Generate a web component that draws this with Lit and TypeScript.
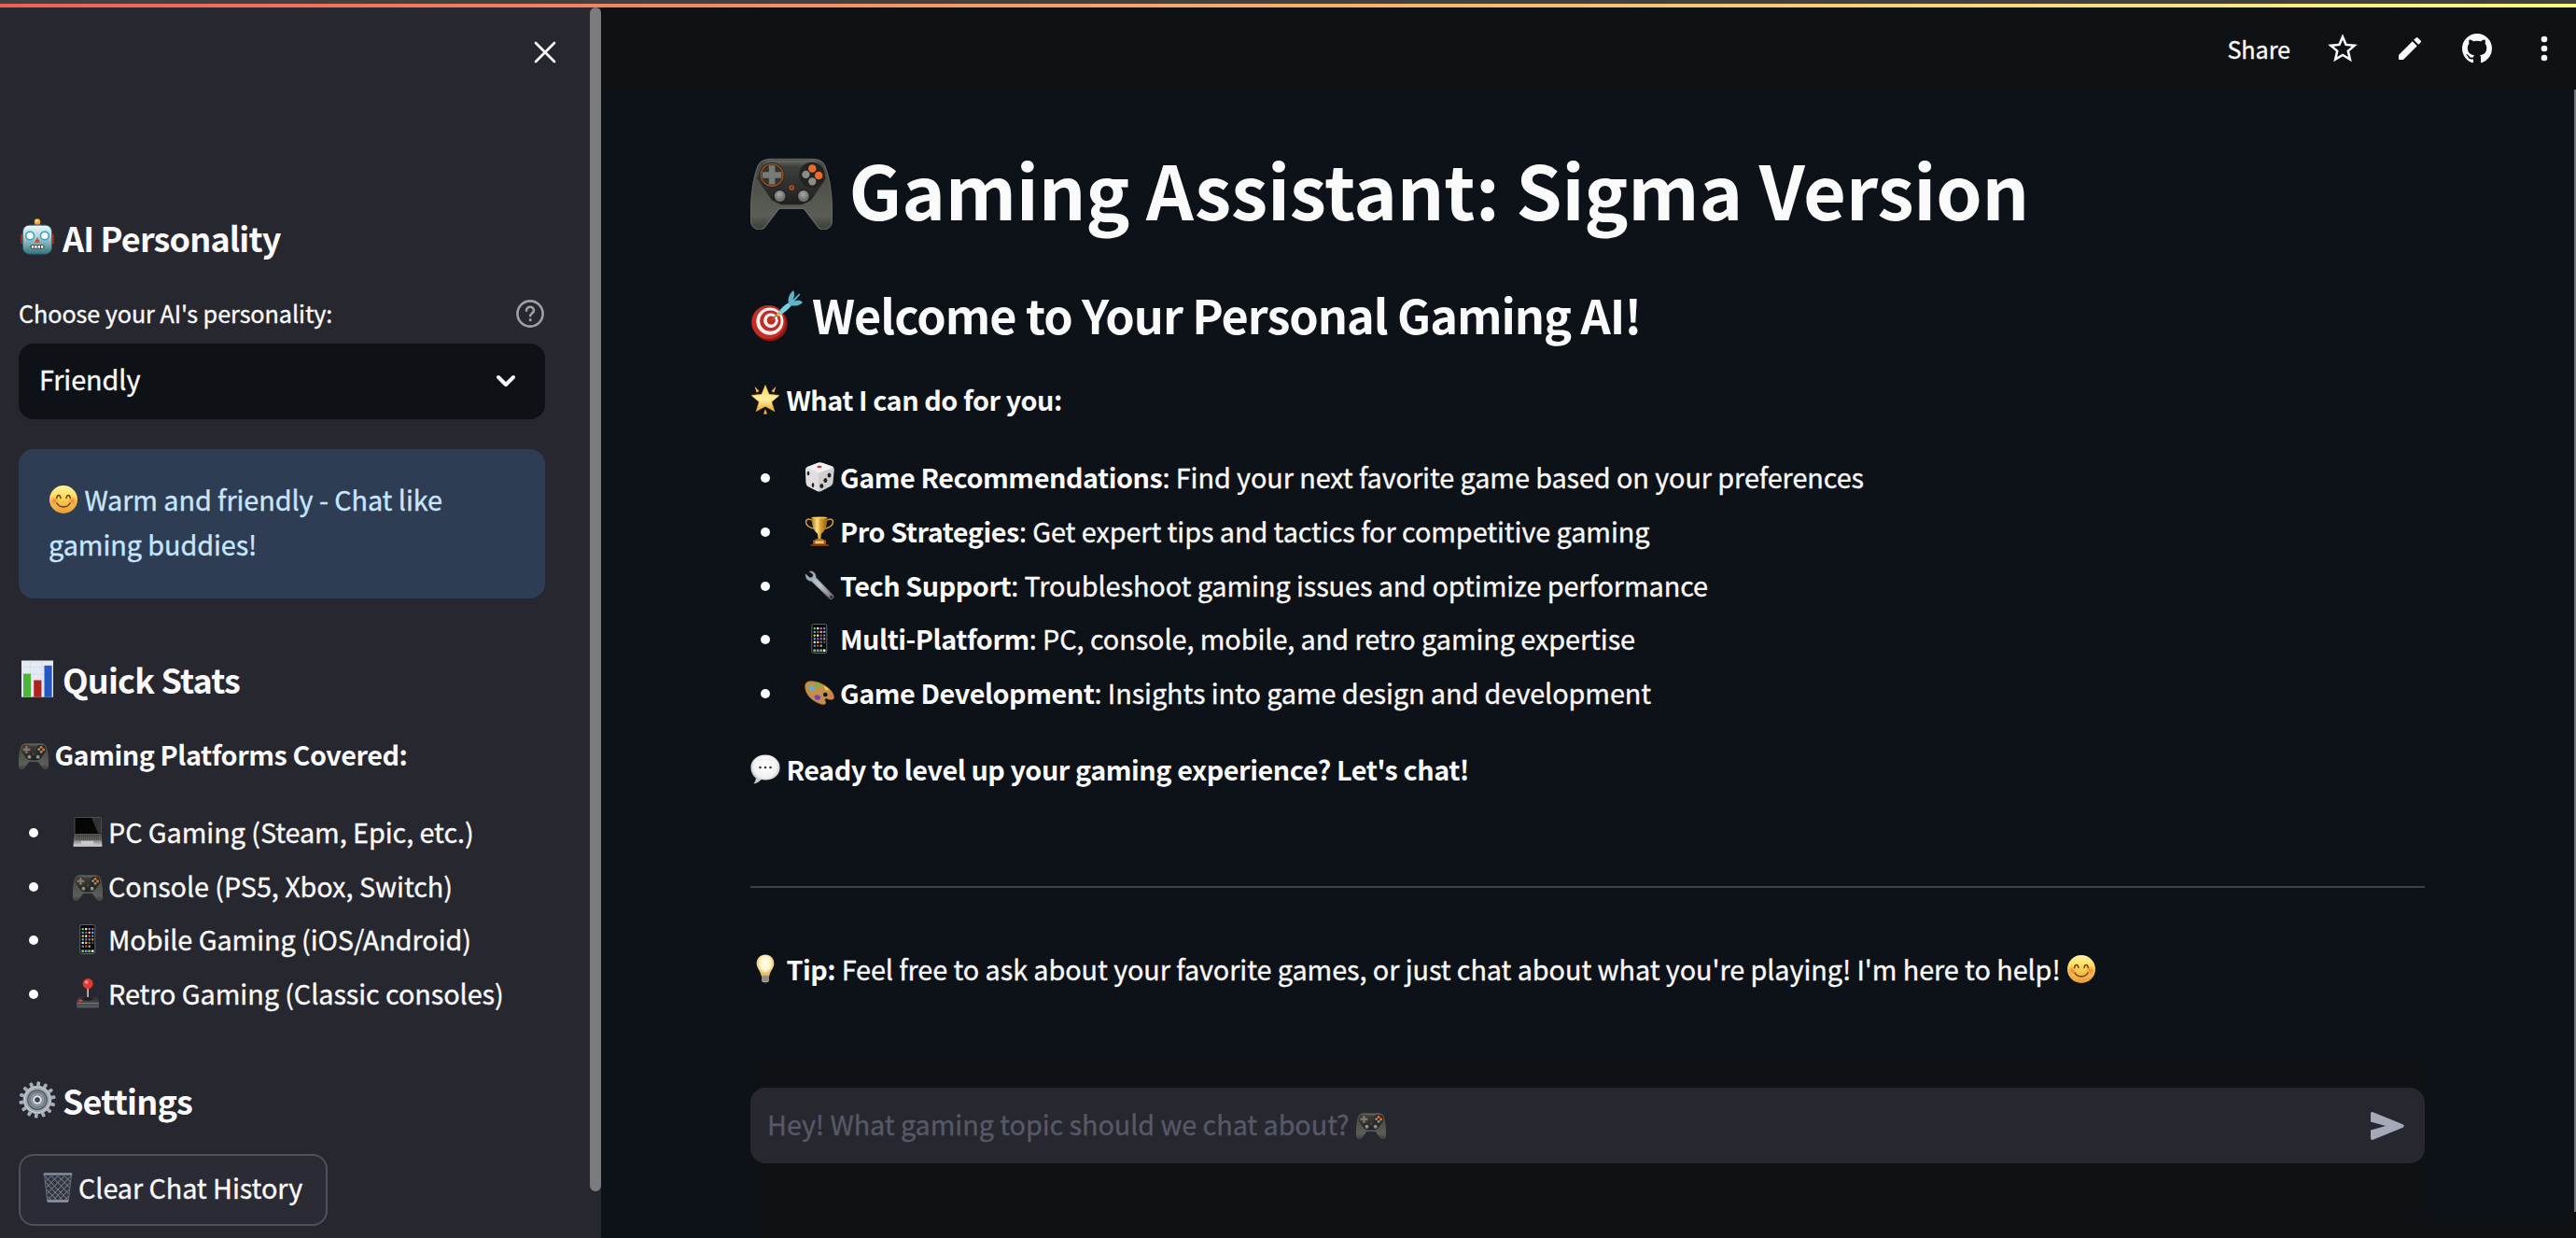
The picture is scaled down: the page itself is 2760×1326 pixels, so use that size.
import { LitElement, html, svg, css, TemplateResult } from "lit";
import { customElement } from "lit/decorators.js";

const dots = (pts: number[][], color: string, r = 1) =>
  pts.map(([x, y]) => svg`<circle cx=${x} cy=${y} r=${r} fill=${color} />`);

const appColors = ["#5fd35f", "#fff", "#c86adf", "#8a8a8a", "#4aa8e8", "#777", "#ffb98a", "#6ab8f0", "#f4d84a", "#fff", "#e05050", "#4aa8e8",
  "#38b0e8", "#d048c0", "#3f8ff0", "#f08a2a", "#eee", "#f4d84a", "#777", "#555", "#4aa8e8", "#e04848", "#bbb", "#111"];

const art: Record<string, () => unknown> = {
  gamepad: () => svg`
    <defs>
      <linearGradient id="gpBody" x1="0" y1="0" x2="0" y2="1"><stop offset="0" stop-color="#474845"/><stop offset=".45" stop-color="#51534d"/><stop offset=".8" stop-color="#5b5d57"/><stop offset="1" stop-color="#3b3c39"/></linearGradient>
      <linearGradient id="gpTop" x1="0" y1="0" x2="0" y2="1"><stop offset="0" stop-color="#6a6c68"/><stop offset=".15" stop-color="#3d3f3c"/><stop offset="1" stop-color="#1f201f"/></linearGradient>
      <radialGradient id="gpStick" cx=".45" cy=".35"><stop offset="0" stop-color="#a8aaa8"/><stop offset="1" stop-color="#6f7170"/></radialGradient>
    </defs>
    <path d="M3 7C4 5 6 4.400 8.500 4.500H23.500C26 4.400 28 5 29 7C31 12 32 20 31.900 28C31.800 32.500 27.500 32.800 26 30.500L20.800 23.800H11.200L6 30.500C4.500 32.800.200 32.500.100 28C0 20 1 12 3 7Z" fill="url(#gpBody)" stroke="#7c7e78" stroke-opacity=".65" stroke-width=".45"/>
    <path d="M5 6.200C7 4.300 9 5 11 5H21C23 5 25 4.300 27 6.200L29.500 12L27.500 15L23.600 20.500L20 22.300H12L8.400 20.500L4.500 15L2.500 12Z" fill="url(#gpTop)"/>
    <circle cx="8.400" cy="10.700" r="4.900" fill="#262726"/><circle cx="8.400" cy="10.700" r="4.300" fill="#333432" stroke="#a3501f" stroke-width=".5"/>
    <path d="M7.200 7H9.600V9.500H12.100V11.900H9.600V14.400H7.200V11.900H4.700V9.500H7.200Z" fill="#777a77"/>
    <circle cx="24" cy="10.700" r="5" fill="#222322"/>
    <circle cx="24.100" cy="8.200" r="1.550" fill="#ee6a26"/><circle cx="26.600" cy="10.900" r="1.550" fill="#ee6a26"/><circle cx="21.600" cy="10.500" r="1.500" fill="#8c8e8c"/><circle cx="24.100" cy="13.200" r="1.500" fill="#8c8e8c"/>
    <circle cx="16.100" cy="15.600" r=".75" fill="#333" stroke="#c25a20" stroke-width=".5"/>
    <circle cx="11.500" cy="19" r="2.700" fill="#222"/><circle cx="20.700" cy="19" r="2.700" fill="#222"/>
    <circle cx="11.500" cy="18.900" r="2.150" fill="url(#gpStick)"/><circle cx="20.700" cy="18.900" r="2.150" fill="url(#gpStick)"/>`,
  target: () => svg`
    <ellipse cx="12" cy="21" rx="10.700" ry="10.600" fill="#8e1815"/><circle cx="11" cy="20" r="10.300" fill="#c72b25"/>
    <circle cx="11.900" cy="19.500" r="8.300" fill="#f4f0ee"/><circle cx="12.200" cy="19.200" r="6.400" fill="#c02b28"/><circle cx="12.500" cy="19" r="4.500" fill="#f4f0ee"/><circle cx="12.700" cy="18.900" r="2.600" fill="#c02b28"/>
    <path d="M12.700 19L19 12.800" stroke="#9a6a35" stroke-width=".8"/><path d="M15.800 15.500L17.300 13.600L19 15.300L17 16.600Z" fill="#e3b93c"/>
    <path d="M17.300 14C19 11 21 9.500 23.500 8.200L25 10C23 12.500 20.500 14.500 17.800 15.800Z" fill="#79cfe0"/>
    <path d="M23.300 8.500C22.800 5 24 2.500 26.300.600C27.300 2.500 27 4.500 26 6.400L29.800 2.600L30.500 3.200L27 7.200C29 6.500 31 6.600 32 8C30.500 9.800 27 10.500 24.600 9.800Z" fill="#5eb3c7"/>`,
  star: () => svg`
    <defs><linearGradient id="stG" x1="0" y1="0" x2="0" y2="1"><stop offset="0" stop-color="#f8d568"/><stop offset=".55" stop-color="#fdf0a0"/><stop offset="1" stop-color="#eda62c"/></linearGradient></defs>
    <path d="M16 .500L20 10.300L31 11.400L22.800 18.500L25.800 28.600L16 23.300L6.200 28.600L9.200 18.500L1 11.400L12 10.300Z" fill="url(#stG)" stroke="#edaf3c" stroke-width=".6" stroke-linejoin="round"/>
    <path d="M16 26L18 31.500H14ZM4.500 2L9.500 6.800L6.800 8.700ZM27.500 2L22.500 6.800L25.200 8.700Z" fill="#f1b43c"/>`,
  die: () => svg`
    <path d="M1 8Q1 6 3 5L15 .600Q17 .200 19 .800L29.500 4.500Q32 5.600 31.800 8L30.500 22Q30 24.500 28 25.700L17.500 31.200Q15.500 32 13.500 31L3.800 26Q2 25 1.700 22.500Z" fill="#cfcfcf"/>
    <path d="M2 6Q2 5.400 4 4.700L15 .600Q17 .200 19 .800L29.500 4.500Q31 5.200 30.500 6L17 11Q15 11.600 13 11Z" fill="#f3f3f3"/>
    <path d="M1 8Q1.300 5.500 4 6.700L12.500 10Q15 11 15 13L15 31.500L3.800 26Q2 25 1.700 22.500Z" fill="#dedede"/>
    <ellipse cx="16" cy="5" rx="2.700" ry="1.200" fill="#d33b35"/>
    <ellipse cx="4" cy="12" rx="1.300" ry="2.300" fill="#222"/><ellipse cx="9" cy="24.500" rx="1.300" ry="2.500" fill="#222"/>
    <ellipse cx="26.500" cy="14" rx="2" ry="2.500" fill="#222"/><ellipse cx="22.400" cy="19.500" rx="2" ry="2.500" fill="#222"/><ellipse cx="18.300" cy="25.500" rx="2" ry="2.500" fill="#222"/>`,
  trophy: () => svg`
    <defs><linearGradient id="trG"><stop offset="0" stop-color="#a9741a"/><stop offset=".35" stop-color="#fbe28a"/><stop offset=".6" stop-color="#d99a27"/><stop offset="1" stop-color="#8f5e12"/></linearGradient></defs>
    <path d="M8 4.500C5 2 1.500 3 1.500 6C1.500 10 6 12.500 11.500 13.500M24 4.500C27 2 30.500 3 30.500 6C30.500 10 26 12.500 20.500 13.500" fill="none" stroke="#d49a35" stroke-width="1.500"/>
    <path d="M7.500 1H24.500C24.500 10 22 16 18 18.500L17.300 24.500H14.700L14 18.500C10 16 7.500 10 7.500 1Z" fill="url(#trG)"/><ellipse cx="16" cy="1.300" rx="8.500" ry=".9" fill="#f6cf67"/>
    <path d="M11.500 25Q16 22.500 20.500 25L21.500 26H10.500Z" fill="#b97f1c"/><rect x="9" y="25.500" width="14" height="4.800" fill="#a95418"/><rect x="11.500" y="26.400" width="9" height="2.800" fill="#f1cf6c"/><rect x="6.500" y="30" width="19.500" height="2" rx=".4" fill="#7c3512"/>`,
  wrench: () => svg`
    <defs><linearGradient id="wrG" x1="0" y1="0" x2="1" y2="1"><stop offset="0" stop-color="#8f9cad"/><stop offset=".5" stop-color="#b6bdc9"/><stop offset="1" stop-color="#6b5a60"/></linearGradient></defs>
    <path d="M1 3.500C.500 8 3 11.500 7.500 11.700L27 30.500C29 32 32.500 29.500 31 26.700L12.300 7.600C12.500 3 9.500.300 5.500.800L5 1.300L9 4.300C9.500 6.500 7.500 8 5.500 7.500Z" fill="url(#wrG)" stroke="#5d6675" stroke-width=".4"/>
    <circle cx="28.700" cy="28.500" r="1.300" fill="#15161c"/><path d="M10.500 10L26 26" stroke="#e3e6ec" stroke-width=".8" opacity=".6"/>`,
  phone: () => svg`
    <rect x="7.800" y=".500" width="16" height="31" rx="1.800" fill="#060606" stroke="#6c6c6c" stroke-width=".9"/>
    ${appColors.map((c, i) => svg`<rect x=${9.7 + (i % 4) * 3.5} y=${4 + Math.floor(i / 4) * 3.7} width="2.100" height="2.300" rx=".5" fill=${c} />`)}
    <rect x="8.700" y="27.200" width="14.200" height="3.200" fill="#333"/>
    ${["#5fd35f", "#4aa8e8", "#5fd35f", "#fff"].map((c, i) => svg`<rect x=${9.5 + i * 3.5} y="27.600" width="2.400" height="2.400" rx=".5" fill=${c} />`)}`,
  palette: () => svg`
    <path d="M.500 10C0 4 5 3 10 3.800C20 5 31 13 31.700 20.500C32 23.500 28 24.500 24.500 22.500C22 21.500 21 23 22.500 25C24 28.500 21 29.500 17 28C8 25 1 18 .500 10Z" fill="#c48f48" stroke="#8a5a24" stroke-width=".5"/>
    <circle cx="22.300" cy="18" r="2.300" fill="#0e1117"/>
    <path d="M4.500 9.500L7 8L9 9L11.500 12L9 14L6 13Z" fill="#54b4e0"/><path d="M11.500 5.500L14.500 5L17.500 8L14.500 9.500L12 8Z" fill="#5cc04a"/><path d="M20.500 9L24 10.500L26.500 13.500L22.500 13Z" fill="#f2d45a"/><path d="M10 20L13.500 18L17 20L16.500 23.500L12 23.500Z" fill="#7a3fc0"/><path d="M26 18.500L29.500 18L31 20.500L28 22Z" fill="#e8695c"/>`,
  bubble: () => svg`
    <defs><radialGradient id="bbG" cx=".5" cy=".4"><stop offset="0" stop-color="#fff"/><stop offset=".8" stop-color="#f0f0f0"/><stop offset="1" stop-color="#c9c9c9"/></radialGradient></defs>
    <path d="M16 .600C25 .600 31.600 6.500 31.600 14.200C31.600 22 25 27.500 16 27.500C14.500 27.500 13 27.300 11.500 27C9.500 29.500 6.500 31.200 3.500 31.500C5 29.500 5.800 27.500 5.800 25.300C2.500 22.700.400 18.800.400 14.200C.400 6.500 7 .600 16 .600Z" fill="url(#bbG)"/>
    ${dots([[10.5, 14], [16, 14], [21.5, 14]], "#333", 1.3)}`,
  bulb: () => svg`
    <defs><radialGradient id="blG" cx=".5" cy=".4"><stop offset="0" stop-color="#fffdf2"/><stop offset=".65" stop-color="#fdf3c8"/><stop offset="1" stop-color="#e0bd68"/></radialGradient></defs>
    <path d="M16 .500C21.500.500 25.400 4.500 25.400 10C25.400 14.500 21.500 17.500 20.200 23.500H11.800C10.500 17.500 6.600 14.500 6.600 10C6.600 4.500 10.500.500 16 .500Z" fill="url(#blG)"/>
    <path d="M12 23.500H20V28.500Q19.500 30 18 30H14Q12.500 30 12 28.500Z" fill="#a7a39c"/><path d="M12 25.500H20M12 27.800H20" stroke="#625f5a" stroke-width=".7"/><path d="M14 30H18L17 31.700H15Z" fill="#333"/>`,
  smile: () => svg`
    <defs><linearGradient id="smG" x1="0" y1="0" x2="0" y2="1"><stop offset="0" stop-color="#fff3a6"/><stop offset=".4" stop-color="#fbdb5a"/><stop offset="1" stop-color="#e9983a"/></linearGradient>
    <radialGradient id="smC"><stop offset="0" stop-color="#f0703a" stop-opacity=".75"/><stop offset="1" stop-color="#f0703a" stop-opacity="0"/></radialGradient></defs>
    <circle cx="16" cy="16" r="15" fill="url(#smG)"/><circle cx="6.300" cy="17.500" r="5" fill="url(#smC)"/><circle cx="25.700" cy="17.500" r="5" fill="url(#smC)"/>
    <path d="M8.800 14.500C9.200 10.500 12.400 10.500 12.900 14.500M19.100 14.500C19.600 10.500 22.800 10.500 23.200 14.500" fill="none" stroke="#6b3a12" stroke-width="1.500" stroke-linecap="round"/>
    <path d="M9 20C12 25.200 20 25.200 23 20" fill="none" stroke="#6b3a12" stroke-width="1.500" stroke-linecap="round"/>`,
  robot: () => svg`
    <defs><linearGradient id="rbG" x1="0" y1="0" x2="0" y2="1"><stop offset="0" stop-color="#eafafa"/><stop offset=".4" stop-color="#b4d3d6"/><stop offset="1" stop-color="#2f7480"/></linearGradient></defs>
    <rect x="1.700" y="12.500" width="4" height="9.500" rx="1.800" fill="#a92a20"/><rect x="26.300" y="12.500" width="4" height="9.500" rx="1.800" fill="#a92a20"/>
    <rect x="12.500" y="4.500" width="7" height="3.500" rx="1.500" fill="#6a4a90"/><circle cx="16" cy="2.700" r="2.600" fill="#f2a62f"/><circle cx="15.500" cy="2" r="1.100" fill="#ffe58a"/>
    <rect x="3.600" y="5.700" width="24.800" height="24.800" rx="5.500" fill="url(#rbG)" stroke="#27616c" stroke-width=".6"/>
    <circle cx="9.700" cy="14.800" r="3.500" fill="#fff" stroke="#3ba3c8" stroke-width="1.300"/><circle cx="22.300" cy="14.800" r="3.500" fill="#fff" stroke="#3ba3c8" stroke-width="1.300"/>
    <path d="M16 16L18.500 20.500H13.500Z" fill="#cf4a3c"/><rect x="10" y="22.500" width="12" height="3.500" rx="1.500" fill="#3b3b3b"/>
    ${[11, 13.7, 16.4, 19.1].map((x) => svg`<rect x=${x} y="23.200" width="2" height="2.200" fill="#f2f2f2" />`)}`,
  chart: () => svg`
    <rect x="2.400" y=".400" width="27.200" height="31.300" fill="#e4e9f3"/>
    <path d="M2.400 6H29.600M2.400 12H29.600M2.400 18H29.600M2.400 24H29.600M10 .400V32M20 .400V32" stroke="#cfd8e8" stroke-width=".5"/>
    <rect x="4" y="11.700" width="6.500" height="20" fill="#4cb53a"/><rect x="13" y="17.200" width="6.500" height="14.500" fill="#b0221c"/><rect x="22" y="4.700" width="6.500" height="27" fill="#2457c0"/>`,
  laptop: () => svg`
    <defs><linearGradient id="lpG" x1="0" y1="0" x2="0" y2="1"><stop offset="0" stop-color="#555"/><stop offset=".55" stop-color="#858585"/><stop offset="1" stop-color="#dcdcdc"/></linearGradient></defs>
    <rect x="2" y=".500" width="28.500" height="18" rx="1" fill="#050505" stroke="#666" stroke-width=".7"/><path d="M20 1H30V17.500H27Z" fill="#333"/>
    <path d="M2 18H30.500L31.500 30.500Q31.500 31.700 30.500 31.700H1.500Q.500 31.700.500 30.500Z" fill="url(#lpG)"/>
    <path d="M3 20H29.500M2.800 22H29.800M2.500 24H30" stroke="#222" stroke-width="1" stroke-dasharray="1.500 .5"/><path d="M9 25.800H22L22.500 29.800H8.500Z" fill="#c9c9c9"/>`,
  joystick: () => svg`
    <defs><linearGradient id="jsG" x1="0" y1="0" x2="0" y2="1"><stop offset="0" stop-color="#2b2c30"/><stop offset=".55" stop-color="#45464b"/><stop offset="1" stop-color="#5a5b62"/></linearGradient></defs>
    <path d="M6 19H26L28 25V30Q28 31.500 26.500 31.500H5.500Q4 31.500 4 30V25Z" fill="url(#jsG)"/><path d="M4.500 26.500H27.500" stroke="#85868c" stroke-width=".8"/>
    <path d="M9 22Q14 21 14.500 17.500H17.500Q18 21 23 22Q16 26 9 22Z" fill="#202124"/><rect x="15.300" y="9" width="1.600" height="11" fill="#c9c9c9"/>
    <circle cx="16.200" cy="5.600" r="5.500" fill="#e23a34"/><circle cx="14.800" cy="4" r="1.800" fill="#ff9f98"/><ellipse cx="8.200" cy="23.800" rx="2.300" ry="1.300" fill="#e23a34"/>`,
  gear: () => svg`
    ${Array.from({ length: 14 }, (_, i) => svg`<rect x="14.500" y=".3" width="3" height="6" rx="1" fill="#a5adb6" transform=${`rotate(${(i * 360) / 14 + 4} 16 16)`} />`)}
    <circle cx="16" cy="16" r="12.200" fill="#a2aab3"/><circle cx="16" cy="16" r="11" fill="none" stroke="#c5ccd3" stroke-width=".9"/>
    <circle cx="16" cy="16" r="8.200" fill="#878f98" stroke="#4f565e" stroke-width="1"/><circle cx="16" cy="16" r="6.400" fill="#8f979f" stroke="#626a72" stroke-width=".7"/>
    <circle cx="16" cy="16" r="4.200" fill="#dde2e6" stroke="#737b84" stroke-width=".6"/><circle cx="16" cy="16" r="2.200" fill="#39424c"/>`,
  trash: () => svg`
    <path d="M1.500 2H30.500L27.300 30.500Q27.200 31.700 26 31.700H6Q4.800 31.700 4.700 30.500Z" fill="#33363f" stroke="#777e8b" stroke-width=".8"/>
    <path d="M2 3.500L26.500 29M9 3.500L27.500 22.500M16 3.500L28.500 16M23 3.500L29.500 10M3 10.500L20.500 29M3.800 18L14.500 29M4.500 25L8.500 29M30 3.500L5.500 29M23 3.500L4.500 22.500M16 3.500L3.500 16M9 3.500L2.500 10M29 10.500L11.500 29M28.200 18L17.500 29M27.500 25L23.500 29" stroke="#8d94a1" stroke-width=".85"/>
    <path d="M.500 1.500Q.500.500 1.500.500H30.500Q31.500.500 31.500 1.500V2.700H.500Z" fill="#79808f"/><path d="M1 .900H31" stroke="#a8b6cf" stroke-width=".6"/><rect x="4.800" y="29.300" width="22.400" height="2.300" rx=".8" fill="#8b99b0"/>`,
};

const emoji = (name: string): TemplateResult => html`<svg class="emoji" viewBox="0 0 32 32">${art[name]()}</svg>`;

const platforms = [
  ["laptop", "PC Gaming (Steam, Epic, etc.)"],
  ["gamepad", "Console (PS5, Xbox, Switch)"],
  ["phone", "Mobile Gaming (iOS/Android)"],
  ["joystick", "Retro Gaming (Classic consoles)"],
];

const features = [
  ["die", "Game Recommendations", ": Find your next favorite game based on your preferences"],
  ["trophy", "Pro Strategies", ": Get expert tips and tactics for competitive gaming"],
  ["wrench", "Tech Support", ": Troubleshoot gaming issues and optimize performance"],
  ["phone", "Multi-Platform", ": PC, console, mobile, and retro gaming expertise"],
  ["palette", "Game Development", ": Insights into game design and development"],
];

@customElement("app-root")
export class AppRoot extends LitElement {
  static styles = css`
    :host { display: block; width: 2760px; height: 1326px; overflow: hidden; background: #0d1118; color: #fafafa;
      font-family: "Noto Sans CJK SC", "Noto Sans", sans-serif; font-size: 28.8px; line-height: 48px; white-space: nowrap;
      letter-spacing: -0.0025em; -webkit-text-stroke: 0.35px currentColor; }
    * { box-sizing: border-box; }
    h1, h2, h3, p, ul { margin: 0; padding: 0; font-size: inherit; }
    b, h1, h2, h3 { font-weight: 700; -webkit-text-stroke: 0; }
    b { letter-spacing: -0.0156em; }
    .page { display: flex; flex-direction: column; height: 1326px; }
    .strip { height: 8px; flex: none; border-top: 4px solid #404040; background: linear-gradient(90deg, #f15f57, #fffd80) padding-box; }
    .body { display: flex; flex: 1; min-height: 0; }
    .emoji { width: 32px; height: 32px; flex: none; display: block; }
    .line { display: flex; align-items: center; gap: 6.4px; height: 48px; white-space: pre; }

    .side { width: 644px; flex: none; background: #272730; display: flex; }
    .side-in { width: 632px; padding: 0 48px 0 20px; display: flex; flex-direction: column; }
    .thumb { width: 12px; height: 1268px; border-radius: 6px; background: #7c7c7f; }
    .close { height: 96px; display: flex; justify-content: flex-end; align-items: center; margin-bottom: 126.3px; }
    .close svg { width: 24px; height: 24px; margin-right: -12px; }
    .h3 { display: flex; align-items: center; gap: 7px; height: 48px; font-size: 36px; letter-spacing: -0.0235em; }
    .h3 .emoji { width: 40px; height: 40px; }
    .label { display: flex; justify-content: space-between; height: 42px; line-height: 42px; font-size: 25.2px; margin: 35.7px 0 12px; }
    .label svg { width: 32px; height: 32px; margin: 6px 0 0; }
    .select { height: 81px; border-radius: 16px; background: #0e1115; display: flex; align-items: center; justify-content: space-between; padding: 0 31px 4px 22px; }
    .select svg { width: 22px; height: 14px; margin-top: 4px; }
    .info { height: 160px; margin: 32px 0 62.3px; border-radius: 16px; background: #2e3d53; color: #c7e6ff; padding: 30.5px 32px 33px; }
    .stats { margin-bottom: 33px; }
    .list { list-style: none; display: flex; flex-direction: column; }
    .list li { display: flex; align-items: center; height: 57.6px; gap: 6px; padding-left: 11px; white-space: pre; }
    .list li::before { content: ""; width: 10px; height: 10px; border-radius: 50%; background: #fafafa; flex: none; margin-right: 31px; margin-top: 2px; }
    .side .list { margin: 30.2px 0 61.3px; }
    .btn { width: 331px; height: 77px; margin-top: 33.7px; border: 2px solid #50505a; border-radius: 16px; background: #2b2b36; padding: 0 0 4px 24px; display: flex; align-items: center; gap: 6px; }

    .main { flex: 1; display: flex; flex-direction: column; }
    .bar { height: 88px; flex: none; background: #0e1215; display: flex; align-items: center; justify-content: flex-end; padding: 0 18px 0 0; }
    .share { font-size: 25.2px; line-height: 42px; margin-right: 37px; }
    .icon { display: block; flex: none; width: 32px; height: 32px; fill: #fafafa; margin-right: 40px; }
    .icon.wide { width: 38px; height: 38px; margin-right: 37px; }
    .icon.last { margin-right: 0; }
    .rail { height: 1202px; width: 2px; background: #77777a; flex: none; }
    .scroll { flex: 1; display: flex; min-height: 0; background: linear-gradient(#0e1215, #0e1215) right bottom / 160px 28px no-repeat; }
    .doc { flex: 1; display: flex; flex-direction: column; }
    .content { padding: 0 160px; width: 2114px; height: 1037px; flex: none; }
    .title { display: flex; align-items: center; gap: 17.6px; height: 106px; font-size: 79.2px; margin-top: 52.5px; letter-spacing: -0.0029em; }
    .title .emoji { width: 88px; height: 88px; }
    .h2 { display: flex; align-items: center; gap: 10px; height: 68px; font-size: 50.4px; margin: 48.5px 0 33.4px; letter-spacing: -0.0204em; }
    .h2 .emoji { width: 56px; height: 56px; margin-top: 1px; }
    .main .list { margin: 30.2px 0 29.8px; }
    .rule { height: 2px; background: #404042; margin: 100.6px 0 63.4px; }
    .bottom { flex: 1; margin: 0 156px 0 160px; padding: 32px 4px 0 0; background: #0e1215; }
    .input { height: 81px; border-radius: 16px; background: #272730; color: #565967; display: flex; align-items: center; justify-content: space-between; padding: 0 21px 4px 18px; }
    .input .emoji { margin-left: 1px; }
    .send { width: 38px; height: 32px; margin-top: 4px; }
  `;

  render() {
    return html`
      <div class="page">
        <div class="strip"></div>
        <div class="body">
          <aside class="side">
            <div class="side-in">
              <div class="close"><svg viewBox="0 0 24 24" fill="none" stroke="#fafafa" stroke-width="2.700" stroke-linecap="round"><path d="M2 2L22 22M22 2L2 22" /></svg></div>
              <h3 class="h3">${emoji("robot")}<span>AI Personality</span></h3>
              <div class="label"><span>Choose your AI's personality:</span>
                <svg viewBox="0 0 32 32" fill="none" stroke="#a0a0a4" stroke-width="2.600" stroke-linecap="round"><circle cx="16" cy="16" r="13.600" /><path d="M12 12.800C12 7.300 20 7.500 20 12.500C20 15.300 16.200 15.700 16.200 18.300" /><path d="M16.200 22.500V22.700" stroke-width="3" /></svg>
              </div>
              <div class="select"><span>Friendly</span><svg viewBox="0 0 22 14" fill="none" stroke="#fafafa" stroke-width="4" stroke-linecap="round" stroke-linejoin="round"><path d="M3 3L11 11L19 3" /></svg></div>
              <div class="info"><div class="line">${emoji("smile")}<span>Warm and friendly - Chat like</span></div><div class="line">gaming buddies!</div></div>
              <h3 class="h3 stats">${emoji("chart")}<span>Quick Stats</span></h3>
              <p class="line">${emoji("gamepad")}<b>Gaming Platforms Covered:</b></p>
              <ul class="list">${platforms.map(([icon, text]) => html`<li>${emoji(icon)}<span>${text}</span></li>`)}</ul>
              <h3 class="h3">${emoji("gear")}<span>Settings</span></h3>
              <div class="btn">${emoji("trash")}<span>Clear Chat History</span></div>
            </div>
            <div class="thumb"></div>
          </aside>
          <main class="main">
            <header class="bar">
              <span class="share">Share</span>
              <svg class="icon wide" viewBox="0 0 24 24"><path d="M22 9.240l-7.190-.620L12 2 9.190 8.630 2 9.240l5.460 4.730L5.820 21 12 17.270 18.180 21l-1.630-7.030L22 9.240zM12 15.400l-3.760 2.270 1-4.280-3.320-2.880 4.380-.380L12 6.100l1.710 4.040 4.380.380-3.320 2.880 1 4.280L12 15.400z" /></svg>
              <svg class="icon" viewBox="0 0 24 24"><path d="M3 17.460V20.500c0 .280.220.500.500.500h3.040c.130 0 .260-.050.350-.150L17.810 9.940l-3.750-3.750L3.150 17.100c-.100.100-.150.220-.150.360zM20.710 7.040a1 1 0 0 0 0-1.410l-2.340-2.340a1 1 0 0 0-1.410 0l-1.830 1.830 3.750 3.750 1.830-1.830z" /></svg>
              <svg class="icon" viewBox="0 0 16 16"><path d="M8 0C3.580 0 0 3.580 0 8c0 3.540 2.290 6.530 5.470 7.590.400.070.550-.170.550-.380 0-.190-.010-.820-.010-1.490-2.010.370-2.530-.490-2.690-.940-.090-.230-.480-.940-.820-1.130-.280-.150-.680-.520-.010-.530.630-.010 1.080.580 1.230.820.720 1.210 1.870.870 2.330.660.070-.520.280-.870.510-1.070-1.780-.200-3.640-.890-3.640-3.950 0-.870.310-1.590.820-2.150-.080-.200-.360-1.020.080-2.120 0 0 .670-.210 2.200.820.640-.180 1.320-.270 2-.270s1.360.090 2 .270c1.530-1.040 2.200-.820 2.200-.820.440 1.100.160 1.920.080 2.120.510.560.820 1.270.820 2.150 0 3.070-1.870 3.750-3.650 3.950.290.250.540.730.540 1.480 0 1.070-.010 1.930-.010 2.200 0 .210.150.460.550.380A8.010 8.010 0 0 0 16 8c0-4.420-3.580-8-8-8z" /></svg>
              <svg class="icon last" viewBox="0 0 32 32">${dots([[16, 6], [16, 16], [16, 26]], "#fafafa", 3.3)}</svg>
            </header>
            <div class="scroll">
              <div class="doc">
                <section class="content">
                  <h1 class="title">${emoji("gamepad")}<span>Gaming Assistant: Sigma Version</span></h1>
                  <h2 class="h2">${emoji("target")}<span>Welcome to Your Personal Gaming AI!</span></h2>
                  <p class="line">${emoji("star")}<b>What I can do for you:</b></p>
                  <ul class="list">${features.map(([icon, name, text]) => html`<li>${emoji(icon)}<span><b>${name}</b>${text}</span></li>`)}</ul>
                  <p class="line">${emoji("bubble")}<b>Ready to level up your gaming experience? Let's chat!</b></p>
                  <div class="rule"></div>
                  <p class="line">${emoji("bulb")}<span><b>Tip:</b> Feel free to ask about your favorite games, or just chat about what you're playing! I'm here to help!</span>${emoji("smile")}</p>
                </section>
                <footer class="bottom">
                  <div class="input"><div class="line"><span>Hey! What gaming topic should we chat about?</span>${emoji("gamepad")}</div>
                    <svg class="send" viewBox="0 0 38 32" fill="#a5a8b8"><path d="M1 3.200Q1 .300 3.500 1.300L35.500 14.300Q38 16 35.500 17.700L3.500 30.700Q1 31.700 1 28.800V20.500L17 16L1 11.500Z" /></svg>
                  </div>
                </footer>
              </div>
              <div class="rail"></div>
            </div>
          </main>
        </div>
      </div>
    `;
  }
}
